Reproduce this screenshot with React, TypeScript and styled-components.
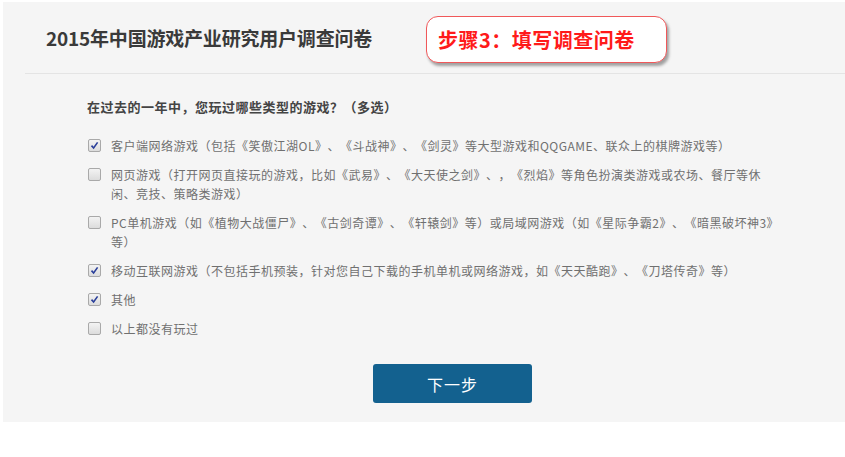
import React from 'react'
import styled, { createGlobalStyle } from 'styled-components'

const GlobalStyle = createGlobalStyle`
    body {
        margin: 0;
        background: #ffffff;
        font-family: "Noto Sans CJK SC", "Noto Sans", sans-serif;
        text-spacing-trim: space-all;
    }
`

const Panel = styled.section`
    margin: 2px 0 0 3px;
    height: 420px;
    background: #f5f5f5;
`

const Header = styled.header`
    display: flex;
    align-items: center;
    height: 71px;
    margin-left: 22px;
    padding-left: 21px;
    border-bottom: 1px solid #e4e4e4;
`

const Title = styled.h1`
    width: 380px;
    margin: 0;
    font-size: 19px;
    font-weight: 700;
    color: #3a3a3a;
    letter-spacing: -0.2px;
`

const Callout = styled.div`
    display: flex;
    align-items: center;
    box-sizing: border-box;
    width: 241px;
    height: 47px;
    margin-top: 4px;
    padding-left: 11px;
    background: #ffffff;
    border: 1.5px solid #f0585a;
    border-radius: 12px;
    box-shadow: 2px 3px 3px rgba(0, 0, 0, 0.35);
    color: #ff1a1a;
    font-size: 20px;
    font-weight: 700;
    letter-spacing: 0.5px;
`

const Body = styled.div`
    padding: 23px 0 0 84px;
`

const Question = styled.p`
    margin: 0;
    line-height: 19px;
    font-size: 13px;
    font-weight: 700;
    color: #444;
    letter-spacing: 0.5px;
`

const Options = styled.ul`
    list-style: none;
    margin: 20px 0 0;
    padding: 0;
    display: flex;
    flex-direction: column;
    gap: 10px;
`

const Option = styled.li`
    display: flex;
    align-items: flex-start;
    gap: 10px;
`

const Box = styled.span<{ $checked: boolean }>`
    flex: none;
    display: flex;
    align-items: center;
    justify-content: center;
    box-sizing: border-box;
    width: 13px;
    height: 13px;
    margin: 3px 0 0 1px;
    border: 1px solid #a9a9a9;
    border-radius: 2px;
    background: linear-gradient(#f3f3f3, #dcdcdc);
    svg {
        visibility: ${(p) => (p.$checked ? 'visible' : 'hidden')};
    }
`

const Label = styled.span`
    width: 680px;
    line-height: 19px;
    font-size: 12px;
    color: #707070;
    letter-spacing: 0.5px;
    white-space: pre-line;
`

const NextButton = styled.button`
    margin: 26px 0 0 286px;
    width: 159px;
    height: 39px;
    border: none;
    border-radius: 3px;
    background: #13618f;
    color: #ffffff;
    font-family: inherit;
    font-size: 16px;
    font-weight: 400;
    letter-spacing: 1px;
    cursor: pointer;
`

const options = [
    { text: '客户端网络游戏（包括《笑傲江湖OL》、《斗战神》、《剑灵》等大型游戏和QQGAME、联众上的棋牌游戏等）', checked: true },
    { text: '网页游戏（打开网页直接玩的游戏，比如《武易》、《大天使之剑》、，《烈焰》等角色扮演类游戏或农场、餐厅等休\n闲、竞技、策略类游戏）', checked: false },
    { text: 'PC单机游戏（如《植物大战僵尸》、《古剑奇谭》、《轩辕剑》等）或局域网游戏（如《星际争霸2》、《暗黑破坏神3》\n等）', checked: false },
    { text: '移动互联网游戏（不包括手机预装，针对您自己下载的手机单机或网络游戏，如《天天酷跑》、《刀塔传奇》等）', checked: true },
    { text: '其他', checked: true },
    { text: '以上都没有玩过', checked: false },
]

const App = () => {
    return (
        <>
            <GlobalStyle />
            <Panel>
                <Header>
                    <Title>2015年中国游戏产业研究用户调查问卷</Title>
                    <Callout>步骤3：填写调查问卷</Callout>
                </Header>
                <Body>
                    <Question>在过去的一年中，您玩过哪些类型的游戏？（多选）</Question>
                    <Options>
                        {options.map((o) => (
                            <Option key={o.text}>
                                <Box $checked={o.checked}>
                                    <svg width="9" height="9" viewBox="0 0 9 9">
                                        <path d="M1.5 4.6 L3.6 7 L7.6 1.4" fill="none" stroke="#2a3f9a" strokeWidth="1.6" />
                                    </svg>
                                </Box>
                                <Label>{o.text}</Label>
                            </Option>
                        ))}
                    </Options>
                    <NextButton>下一步</NextButton>
                </Body>
            </Panel>
        </>
    )
}

export default App
